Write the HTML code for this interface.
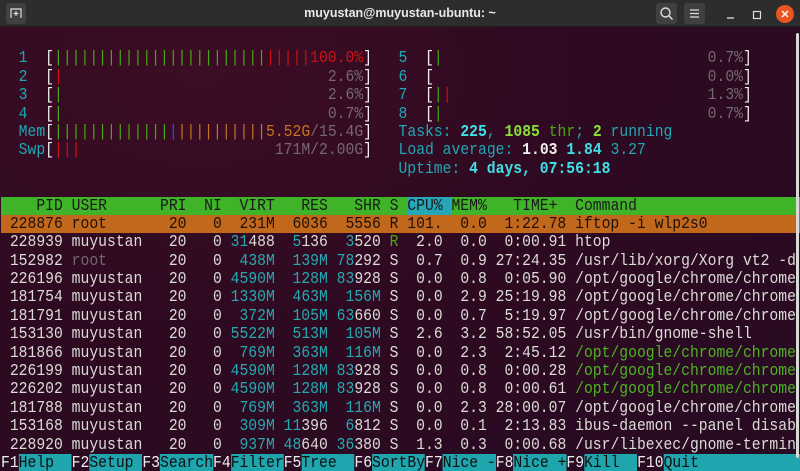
<!DOCTYPE html>
<html><head><meta charset="utf-8"><style>
*{margin:0;padding:0;box-sizing:border-box}
body{width:800px;height:471px;overflow:hidden;background:#2c0a22;font-family:"Liberation Mono",monospace}
#tb{position:absolute;left:0;top:0;width:800px;height:27px;background:#2d2d2d;border-bottom:1px solid #1e1e1e}
#tb .t{position:absolute;left:0;width:800px;top:6px;text-align:center;color:#e8e8e8;font:bold 12.5px "Liberation Sans",sans-serif}
.btn{position:absolute;top:3px;width:21px;height:21px;background:#404040;border-radius:3px}
#term{position:absolute;left:0;top:27px;width:800px;height:444px;background:radial-gradient(ellipse at 25% 10%,#3c0d24 0%,#2e0a22 45%,#270b23 100%);overflow:hidden}
#txt{position:absolute;left:1px;top:4px;font-size:16.5px;line-height:18.4px;color:#dcdcd6;transform:scaleX(0.892);transform-origin:0 0;width:900px}
.l{height:18.4px;width:900px;overflow:hidden;white-space:pre}
.tc{color:#1ea8b4}.c{color:#25a9b1}.bc{color:#41e0e6;font-weight:bold}.w{color:#f0f0ec;font-weight:bold}
.g{color:#4aa615}.bg{color:#8ae234;font-weight:bold}.r{color:#d01010}.b{color:#3050e0}.o{color:#c7741c}.gr{color:#75686f}.br{color:#eeeeee}
.hd{background:#3fb428;color:#1a1a1a}.cp{background:#27a6b7}
.sel{background:#c2681c;color:#201008}
.dm{color:#6f6a6e}.gt{color:#4db320}
.fk{color:#eee}.fl{background:#1fa5ad;color:#101010}
#sb{position:absolute;left:796px;top:6px;width:3px;height:425px;background:#d9d9d9;border-radius:2px}
</style></head><body>
<div id="tb">
<div class="btn" style="left:6px;width:20px"><svg width="20" height="21" viewBox="0 0 20 21"><path d="M5 15V6h10v9M10 8v5M7.5 10.5h5" stroke="#ddd" stroke-width="1.2" fill="none"/></svg></div>
<div class="t">muyustan@muyustan-ubuntu: ~</div>
<div class="btn" style="left:656px"><svg width="21" height="21"><circle cx="9.5" cy="9.5" r="4.5" stroke="#ddd" stroke-width="1.4" fill="none"/><path d="M13 13l3.5 3.5" stroke="#ddd" stroke-width="1.5"/></svg></div>
<div class="btn" style="left:684px"><svg width="21" height="21"><path d="M6 7h9M6 10.5h9M6 14h9" stroke="#ddd" stroke-width="1.2"/></svg></div>
<svg style="position:absolute;left:720px;top:4px" width="80" height="20"><path d="M7 14h7" stroke="#ddd" stroke-width="1.3"/><rect x="33.5" y="7.5" width="7" height="7" stroke="#ddd" stroke-width="1.2" fill="none"/><circle cx="65" cy="10" r="9" fill="#e9541f"/><path d="M62 7l6 6M68 7l-6 6" stroke="#fff" stroke-width="1.4"/></svg>
</div>
<div id="term">
<div id="txt"><div class="l"> </div><div class="l">  <span class="tc">1</span>  <span class="br">[</span><span class="g">||||||||||||||||||||||||</span><span class="r">|||||100.0%</span><span class="br">]</span>   <span class="tc">5</span>  <span class="br">[</span><span class="g">|</span>                            <span class="gr">  0.7%</span><span class="br">]</span></div><div class="l">  <span class="tc">2</span>  <span class="br">[</span><span class="r">|</span>                            <span class="gr">  2.6%</span><span class="br">]</span>   <span class="tc">6</span>  <span class="br">[</span>                             <span class="gr">  0.0%</span><span class="br">]</span></div><div class="l">  <span class="tc">3</span>  <span class="br">[</span><span class="g">|</span>                            <span class="gr">  2.6%</span><span class="br">]</span>   <span class="tc">7</span>  <span class="br">[</span><span class="g">|</span><span class="r">|</span>                           <span class="gr">  1.3%</span><span class="br">]</span></div><div class="l">  <span class="tc">4</span>  <span class="br">[</span><span class="g">|</span>                            <span class="gr">  0.7%</span><span class="br">]</span>   <span class="tc">8</span>  <span class="br">[</span><span class="g">|</span>                            <span class="gr">  0.7%</span><span class="br">]</span></div><div class="l">  <span class="tc">Mem</span><span class="br">[</span><span class="g">|||||||||||||</span><span class="b">|</span><span class="o">||||||||||5.52G</span><span class="gr">/15.4G</span><span class="br">]</span>   <span class="tc">Tasks: </span><span class="bc">225</span><span class="tc">, </span><span class="bg">1085</span><span class="g"> thr</span><span class="tc">; </span><span class="bg">2</span><span class="tc"> running</span></div><div class="l">  <span class="tc">Swp</span><span class="br">[</span><span class="r">|||</span>                      <span class="gr">171M/2.00G</span><span class="br">]</span>   <span class="tc">Load average: </span><span class="w">1.03 </span><span class="bc">1.84 </span><span class="tc">3.27</span></div><div class="l">                                             <span class="tc">Uptime: </span><span class="bc">4 days, 07:56:18</span></div><div class="l"> </div><div class="l hd">    PID USER      PRI  NI  VIRT   RES   SHR S <span class="cp">CPU% </span>MEM%   TIME+  Command                         </div><div class="l sel"> 228876 root       20   0  231M  6036  5556 R 101.  0.0  1:22.78 iftop -i wlp2s0                 </div><div class="l"> 228939 muyustan   20   0 <span class="c">31</span>488  <span class="c">5</span>136  <span class="c">3</span>520 <span class="g">R</span>  2.0  0.0  0:00.91 htop</div><div class="l"> 152982 <span class="dm">root</span>       20   0  <span class="c">438M</span>  <span class="c">139M</span> <span class="c">78</span>292 S  0.7  0.9 27:24.35 /usr/lib/xorg/Xorg vt2 -d</div><div class="l"> 226196 muyustan   20   0 <span class="c">4590M</span>  <span class="c">128M</span> <span class="c">83</span>928 S  0.0  0.8  0:05.90 /opt/google/chrome/chrome</div><div class="l"> 181754 muyustan   20   0 <span class="c">1330M</span>  <span class="c">463M</span>  <span class="c">156M</span> S  0.0  2.9 25:19.98 /opt/google/chrome/chrome</div><div class="l"> 181791 muyustan   20   0  <span class="c">372M</span>  <span class="c">105M</span> <span class="c">63</span>660 S  0.0  0.7  5:19.97 /opt/google/chrome/chrome</div><div class="l"> 153130 muyustan   20   0 <span class="c">5522M</span>  <span class="c">513M</span>  <span class="c">105M</span> S  2.6  3.2 58:52.05 /usr/bin/gnome-shell</div><div class="l"> 181866 muyustan   20   0  <span class="c">769M</span>  <span class="c">363M</span>  <span class="c">116M</span> S  0.0  2.3  2:45.12 <span class="gt">/opt/google/chrome/chrome</span></div><div class="l"> 226199 muyustan   20   0 <span class="c">4590M</span>  <span class="c">128M</span> <span class="c">83</span>928 S  0.0  0.8  0:00.28 <span class="gt">/opt/google/chrome/chrome</span></div><div class="l"> 226202 muyustan   20   0 <span class="c">4590M</span>  <span class="c">128M</span> <span class="c">83</span>928 S  0.0  0.8  0:00.61 <span class="gt">/opt/google/chrome/chrome</span></div><div class="l"> 181788 muyustan   20   0  <span class="c">769M</span>  <span class="c">363M</span>  <span class="c">116M</span> S  0.0  2.3 28:00.07 /opt/google/chrome/chrome</div><div class="l"> 153168 muyustan   20   0  <span class="c">309M</span> <span class="c">11</span>396  <span class="c">6</span>812 S  0.0  0.1  2:13.83 ibus-daemon --panel disab</div><div class="l"> 228920 muyustan   20   0  <span class="c">937M</span> <span class="c">48</span>640 <span class="c">36</span>380 S  1.3  0.3  0:00.68 /usr/libexec/gnome-termin</div><div class="l"><span class="fk">F1</span><span class="fl">Help  </span><span class="fk">F2</span><span class="fl">Setup </span><span class="fk">F3</span><span class="fl">Search</span><span class="fk">F4</span><span class="fl">Filter</span><span class="fk">F5</span><span class="fl">Tree  </span><span class="fk">F6</span><span class="fl">SortBy</span><span class="fk">F7</span><span class="fl">Nice -</span><span class="fk">F8</span><span class="fl">Nice +</span><span class="fk">F9</span><span class="fl">Kill  </span><span class="fk">F10</span><span class="fl">Quit                    </span></div></div>
<div id="sb"></div>
</div>
</body></html>
